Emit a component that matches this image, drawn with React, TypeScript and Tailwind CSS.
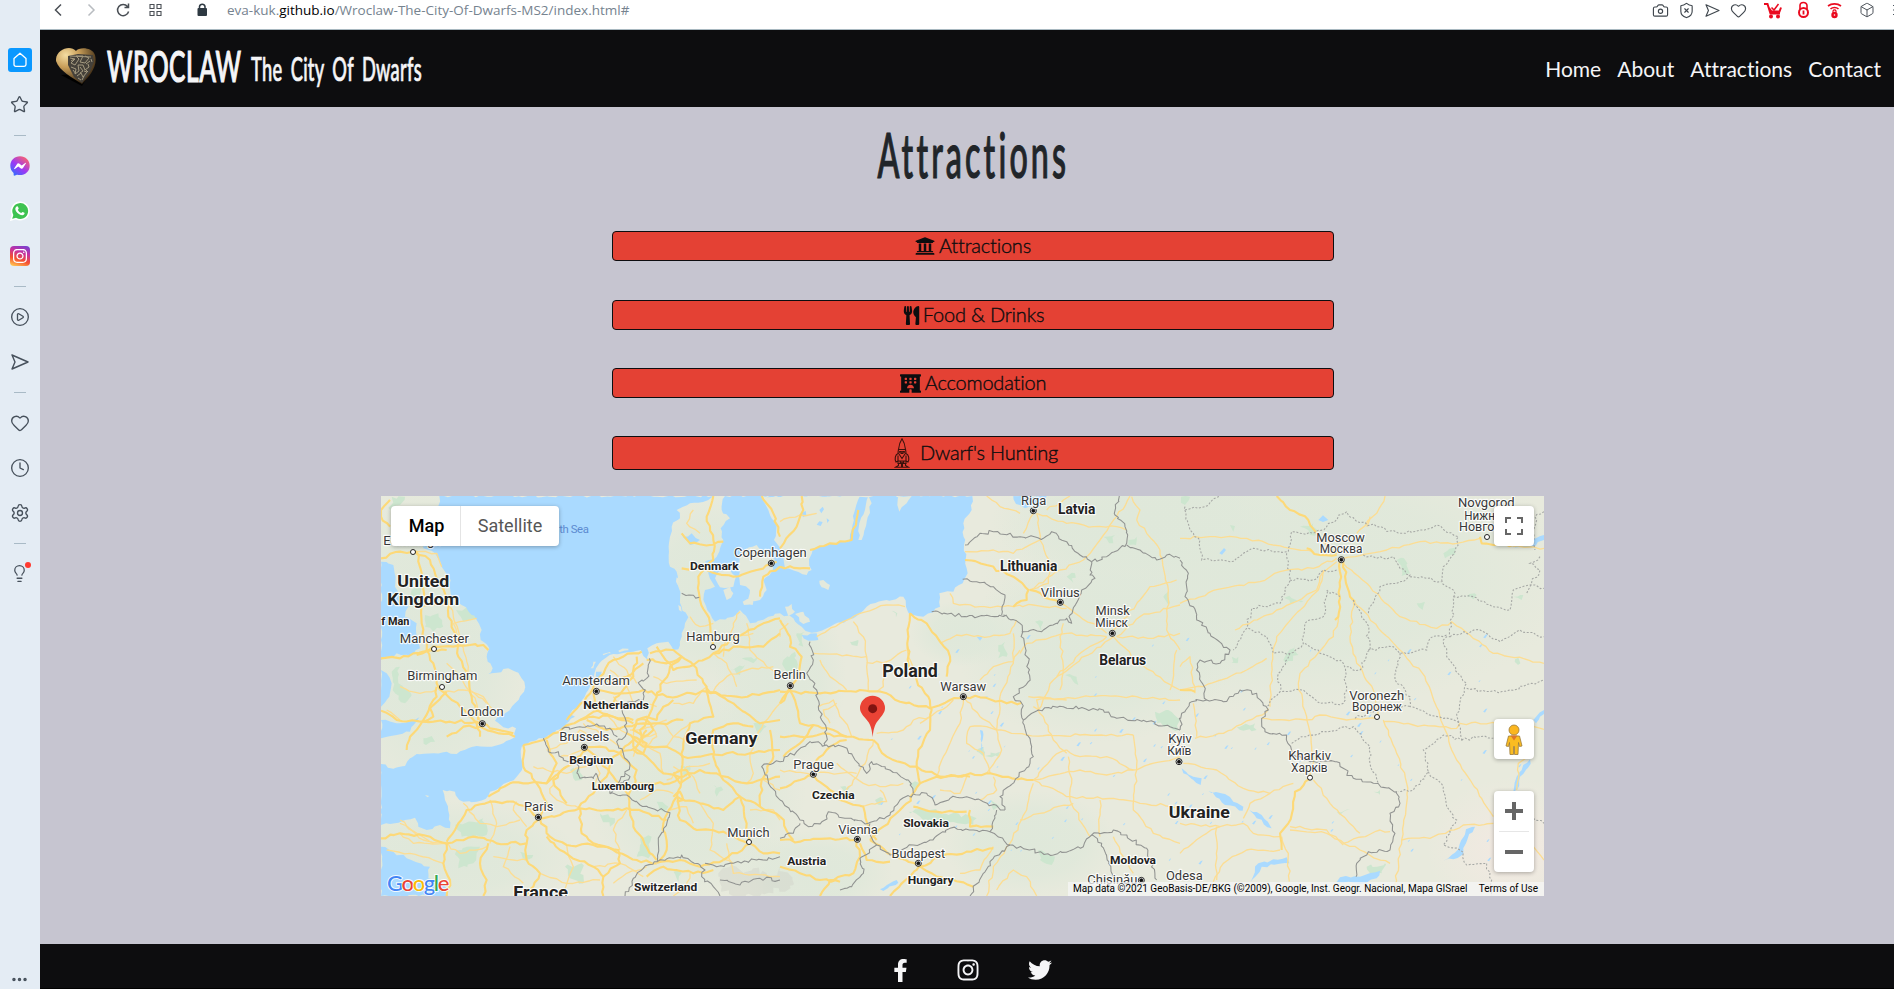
import React from "react";
import {
  FaFacebookF,
  FaFacebookMessenger,
  FaHotel,
  FaInstagram,
  FaTwitter,
  FaUniversity,
  FaUtensils,
} from "react-icons/fa";
import {
  Box,
  Camera,
  CirclePlay,
  Clock4,
  Ellipsis,
  Heart,
  Lightbulb,
  Settings,
  ShieldX,
  Star,
} from "lucide-react";

/* ---------- map geometry: three 1200-unit wide tiles (west, centre, east) ---------- */

type Pt = [number, number];

const parse = (s: string): Pt[] =>
  s.split(" ").map((p) => p.split(",").map(Number) as Pt);

// Deterministic noise, so lines look surveyed rather than ruled.
const noise = (n: number) => {
  const v = Math.sin(n * 12.9898) * 43758.5453;
  return v - Math.floor(v) - 0.5;
};

const rough = (s: string, amp: number, step: number, closed = false) => {
  const pts = parse(s);
  if (closed) pts.push(pts[0]);
  let d = `M${pts[0][0]},${pts[0][1]}`;
  for (let i = 1; i < pts.length; i++) {
    const [x0, y0] = pts[i - 1];
    const [x1, y1] = pts[i];
    const n = Math.max(1, Math.round(Math.hypot(x1 - x0, y1 - y0) / step));
    for (let k = 1; k < n; k++) {
      const t = k / n;
      const seed = x0 * 0.37 + y0 * 0.91 + k * 3.1;
      d += `L${(x0 + (x1 - x0) * t + noise(seed) * amp).toFixed(1)},${(y0 + (y1 - y0) * t + noise(seed + 7) * amp).toFixed(1)}`;
    }
    d += `L${x1},${y1}`;
  }
  return d + (closed ? "Z" : "");
};

const offsets = [0, 1200, 2400];

const water: string[][] = [
  [
    "178,18 172,60 150,100 130,175 165,190 185,230 212,270 215,320 245,345 290,390 305,420 302,450 328,475 320,500 338,535 325,552 350,548 385,535 415,548 433,575 432,605 405,640 375,670 345,692 370,712 408,715 405,742 370,760 320,770 290,768 265,775 230,792 200,785 160,790 110,792 90,805 75,828 40,836 3,822 3,1005 45,1000 75,990 105,983 115,1010 140,1020 180,1005 210,1015 208,975 195,930 188,900 225,905 238,930 290,935 325,918 330,905 370,882 410,860 426,840 425,770 450,755 495,745 540,718 575,697 556,702 585,680 570,672 600,645 625,600 642,575 648,535 665,512 700,492 760,485 782,480 790,498 804,510 802,475 830,460 865,455 880,480 895,478 905,430 915,400 925,382 905,350 895,290 890,245 870,230 870,140 875,110 900,85 890,60 930,40 985,30 1000,18",
    "3,215 40,225 45,290 85,350 75,380 110,400 112,450 120,475 90,497 50,490 30,505 3,510",
    "3,540 20,550 35,580 28,620 3,650",
    "3,690 60,700 118,682 90,725 50,735 3,745",
    "3,1070 40,1085 80,1105 150,1130 145,1165 190,1180 205,1218 3,1218",
    "1035,18 1025,60 1050,85 1022,115 1030,150 1010,200 975,215 985,250 1005,290 975,300 970,330 990,370 1005,395 1060,380 1080,360 1110,400 1165,380 1200,370 1240,385 1265,410 1295,428 1350,410 1420,385 1460,350 1520,330 1570,320 1578,350 1590,375 1630,380 1680,350 1678,310 1720,305 1748,280 1763,250 1752,165 1750,100 1775,60 1777,18",
    "908,140 935,130 960,150 930,165",
    "648,545 665,545 660,575 645,570",
  ],
  ["700,18 708,42 735,55 782,48 800,18", "65,435 110,430 115,450 85,452", "300,1198 350,1170 355,1178 310,1203", "600,720 608,722 608,785 604,780", "590,440 608,442 600,452"],
  [
    "85,903 135,912 160,935 190,950 188,962 135,945",
    "5,835 40,860 65,865 62,885 40,870 10,850",
    "208,960 245,975 275,1015 262,1012 230,985",
    "212,1175 235,1120 320,1102 328,1120 245,1130 218,1168",
    "470,1176 480,1162 540,1160 600,1142 590,1165 560,1178",
    "790,1112 835,1078 858,1018 885,1010 858,1060 850,1092 820,1108",
    "1000,905 1010,860 1050,808 1052,822 1020,860 1012,898",
    "1060,690 1092,660 1092,672 1068,700",
    "980,168 1040,160 1092,135 1092,150 1050,172",
  ],
];

const islands: string[][] = [
  [
    "1145,18 1165,60 1190,110 1182,150 1205,190 1215,235 1280,255 1295,240 1287,208 1298,180 1350,162 1405,155 1415,120 1425,60 1440,18",
    "1085,185 1130,165 1160,190 1185,210 1175,245 1150,270 1160,300 1140,330 1100,335 1110,300 1080,285 1075,230",
    "1015,245 1050,240 1068,260 1060,290 1020,292 1005,265",
    "1088,335 1130,320 1118,345 1092,345",
    "1030,300 1050,290 1060,310 1040,330",
    "135,915 148,918 142,922",
    "668,492 690,486 692,490 670,496",
    "715,482 745,476 745,481 718,487",
    "632,535 640,515 648,515 640,535",
    "895,345 903,350 905,365 897,360",
    "890,262 896,268 893,285 888,275",
  ],
  [
    "265,18 275,40 245,150 235,150 238,100",
    "355,18 395,18 380,40 358,65 352,45",
    "118,272 130,270 150,285 145,300 125,292",
    "15,350 35,342 45,365 25,378",
    "45,372 70,365 90,395 70,402",
  ],
  [],
];

const forest: string[][] = [
  [
    "95,300 120,290 125,345 85,352",
    "135,375 175,370 190,410 160,425 135,410",
    "228,360 285,350 290,385 250,395",
    "35,545 60,530 55,580 95,615 75,640 38,600",
    "130,745 155,738 165,755 138,765",
    "35,20 75,20 60,45 30,60",
    "225,1005 310,985 320,1035 245,1040",
    "230,1080 300,1070 280,1120 235,1135",
    "555,1130 605,1120 610,1180 570,1165",
    "780,1045 815,1040 805,1105 770,1100",
    "660,970 705,985 690,1010",
    "570,840 600,832 605,870 580,865",
    "1050,540 1095,525 1080,555",
    "1085,505 1135,500 1120,520",
    "900,830 930,825 920,860",
    "830,935 865,950 850,965",
    "1000,885 1030,900 1010,920",
    "1120,700 1160,710 1140,730",
    "880,1145 905,1150 895,1175",
    "420,1085 460,1095 440,1110",
  ],
  [
    "10,510 45,485 50,540 15,550",
    "50,430 75,425 70,470 55,465",
    "655,465 675,455 680,500 655,505",
    "210,455 235,450 232,468",
    "335,362 352,370 348,382",
    "590,785 610,770 612,800",
    "615,798 660,785 655,800",
    "385,965 450,960 590,985 580,1005 440,990",
    "285,930 310,925 300,945",
    "180,890 215,885 205,915",
    "855,555 890,560 895,585",
    "1045,150 1070,140 1068,165 1045,165",
    "1125,665 1165,660 1200,690 1195,720 1130,700",
    "970,140 1005,135 1000,160",
    "1150,320 1165,305 1165,345",
    "860,260 885,250 880,280",
    "765,395 790,395 785,425",
    "775,1080 825,1100 815,1125 780,1110",
    "630,930 660,950 640,960",
    "370,865 420,880 405,905",
  ],
  [
    "650,210 672,205 690,250 665,258",
    "310,510 345,465 355,495 318,520",
    "790,190 830,170 825,195 795,205",
    "305,315 335,325 370,335 340,340",
    "155,500 175,500 172,520 155,518",
    "170,710 225,700 230,720 190,722",
    "360,110 400,100 410,130 390,135",
    "710,340 735,335 728,360",
    "1000,320 1030,315 1025,330",
    "470,965 510,958 480,975",
    "150,105 165,108 160,125",
    "860,320 890,315 880,328",
    "580,905 600,900 600,915",
    "1005,508 1015,503 1014,525",
    "3,20 30,20 15,45",
    "560,1130 615,1120 605,1150 570,1150",
  ],
];

const mainRoads: string[][] = [
  [
    "3,205 60,185 110,185 125,250 130,330 125,400 140,480 160,520 170,580 195,610 240,650 290,700 300,740",
    "100,185 150,210 175,270 205,330 205,380 230,440 235,500 265,560 275,620 295,690",
    "110,495 160,470 220,470 270,465 310,465 325,480",
    "3,505 60,505 100,490 160,480 200,480",
    "3,662 50,690 130,695 210,695 290,695 330,715 400,730",
    "80,780 90,740 130,690 170,620 170,590",
    "130,695 160,680 150,655 200,605",
    "200,740 250,710 300,710 340,725 405,740",
    "30,110 3,80 3,60 30,30",
    "430,765 470,755 520,730 545,718 600,690 640,680 700,680 760,700",
    "430,765 430,830 470,880 500,940 480,980",
    "325,920 390,880 430,880 500,880 560,830 620,780",
    "480,985 450,960 400,935 330,935 260,960 235,1000 225,1020 200,1055",
    "480,985 440,1020 440,1060 350,1060 280,1040 200,1060 150,1040 60,1030 3,1045",
    "480,985 510,1040 560,1065 640,1065 700,1080 770,1110 830,1120",
    "480,985 540,975 600,955 680,960 740,955 790,965 860,990",
    "500,1040 540,1080 640,1130 670,1160 670,1218",
    "440,1060 440,1110 480,1150 460,1190 440,1218",
    "600,955 605,1030 640,1060 715,1080 720,1120 670,1160",
    "200,1060 190,1120 210,1170 200,1218",
    "310,1218 320,1170 300,1120 325,1060",
    "500,880 530,820 510,790 500,750",
    "560,940 520,870 560,830",
    "595,955 640,910 680,860 700,800 760,750",
    "560,690 620,620 660,560 700,510 760,490 785,485",
    "660,560 700,580 740,560 790,520",
    "655,600 720,610 790,600 860,620 980,605 1070,620 1150,610 1200,600",
    "600,690 660,660 700,640 760,560 770,500",
    "620,690 680,720 720,715 790,700 840,700 910,690",
    "613,775 660,770 720,790 770,770 800,720",
    "613,775 650,800 700,860 745,915 750,965 760,1010 830,1110",
    "770,690 800,680 830,690 850,650 880,630",
    "740,730 790,770 860,770 910,800 960,800 1040,790 1110,790 1200,780",
    "760,780 800,800 850,850 910,860 960,840 1010,850 1100,880 1200,860",
    "790,760 780,720 800,690 820,640 870,530 905,500",
    "905,500 880,480 810,490",
    "905,500 940,525 1000,490 1080,470 1150,470 1200,430",
    "940,525 980,590 1000,680 930,700 910,760 905,860",
    "1000,490 1070,440 1150,400 1200,385",
    "1000,470 990,400 960,330 955,260 1000,210 1000,150 980,80 1000,18",
    "905,235 960,235 1060,260 1130,240 1190,215",
    "1140,320 1150,260 1200,230",
    "905,130 930,160 990,165 1030,155",
    "800,510 860,520 905,500",
    "830,470 850,500 880,540 940,525",
    "905,860 890,920 850,1000 860,1080 832,1118",
    "905,860 870,880 780,880 720,900",
    "890,920 960,940 1030,960 1080,920 1140,950 1200,980",
    "1080,920 1030,870 1000,800 1000,720 1060,700 1120,710",
    "890,910 900,990 950,1020 1030,1025 1110,1060 1150,1090 1200,1090",
    "1080,920 1100,1000 1110,1060 1030,1110",
    "1140,950 1145,870 1180,800 1170,720",
    "830,1118 900,1110 960,1130 1030,1110",
    "800,1160 850,1130 940,1150 1000,1140",
    "1145,18 1180,70 1200,140",
    "720,790 770,840 760,890 745,915",
    "770,690 760,720 790,740 820,720 800,690 770,690",
    "760,740 800,760 790,790 760,770 760,740",
    "980,595 1060,640 1140,700 1200,690",
    "640,610 650,660 700,680 760,690",
    "880,850 920,840 930,860 900,880 880,850",
    "880,920 900,905 910,930 890,935",
  ],
  [
    "0,390 30,440 30,470 65,500 60,560 30,590",
    "30,585 50,650 60,700 100,705 160,720 200,740",
    "0,605 120,610 240,600 320,610 360,635 450,655 510,630 550,620",
    "550,620 600,622 680,640 725,638",
    "390,370 385,440 385,520 410,570 445,620 455,660 450,720 415,780 410,830",
    "390,370 440,400 480,455 510,500 500,560",
    "0,740 60,740 130,730 200,740 280,750",
    "280,750 320,800 390,830 410,830 480,860 620,850 760,870",
    "410,830 420,880 380,940 310,1010 270,1050",
    "100,855 150,900 180,930 250,950 265,1010 290,1050",
    "230,1050 150,1045 60,1055 0,1050",
    "230,1050 240,1100 220,1150 150,1170 120,1218",
    "270,1050 340,1095 420,1130 480,1100 560,1085 640,1075",
    "415,1125 470,1160 580,1190",
    "420,1125 390,1160 330,1218",
    "555,210 620,225 700,260 745,300 740,330 700,350",
    "750,300 840,340",
    "0,175 50,110 70,60 65,18",
    "90,180 150,160 215,150 235,60",
    "30,590 0,640",
    "10,800 60,760 100,705",
    "0,895 60,870 100,855",
    "100,855 110,810 150,770 200,750",
    "420,880 470,860 570,860",
    "570,960 570,1010 640,1010",
    "400,950 470,965 560,965",
    "0,980 40,1050",
    "240,1060 260,1110 330,1115",
    "0,1130 60,1150 120,1170 180,1175",
    "0,640 30,600",
    "0,230 60,235 90,235",
  ],
  [
    "290,18 330,60 385,90 410,130 470,190",
    "380,175 420,195 470,195",
    "480,210 480,290 475,380 465,390",
    "490,215 510,320 525,335",
    "900,140 905,160 940,165 1000,165",
    "390,865 345,905 325,1000 300,1030 305,1080",
    "0,600 45,605",
  ],
];

const minorRoads: string[][] = [
  [
    "110,185 170,190 185,230",
    "210,350 240,440 265,530 270,600 320,640",
    "240,440 220,400 240,395 290,385",
    "190,605 250,600 310,620 340,660",
    "60,690 20,660",
    "300,700 290,640 240,560 200,520",
    "60,990 130,1050 200,1060",
    "20,1080 90,1090 160,1110 190,1120",
    "330,930 350,1000 330,1060",
    "390,1070 370,1130 430,1180",
    "560,1065 580,1130 540,1218",
    "720,1080 700,1020 740,960",
    "640,1130 720,1120 790,1160",
    "700,500 740,540 770,580",
    "690,540 740,590 760,640",
    "610,700 660,730 720,770",
    "680,670 710,710 740,730",
    "770,690 760,740 800,770 830,740 810,700",
    "750,720 820,710 860,690",
    "760,800 780,750 830,730",
    "850,850 840,790 790,760",
    "880,830 930,850 960,910",
    "860,870 920,830 990,820",
    "1000,605 1040,560 1100,540 1180,530",
    "980,590 940,640 880,640",
    "1100,400 1110,480 1160,530 1200,560",
    "930,380 960,410 1000,400",
    "1000,490 1040,520 1070,590",
    "1110,790 1120,850 1100,880",
    "1200,640 1150,700 1110,790",
    "960,940 1000,1000 990,1080 1060,1120",
    "870,960 920,950 940,1000",
    "940,60 920,100 960,130",
    "1050,440 1060,400 1080,365",
    "930,700 880,740 860,770",
    "410,935 400,960 440,1010",
    "250,940 300,1000 350,1010 420,990",
    "520,870 510,910 560,945 600,955",
    "540,800 580,790 613,775",
    "640,740 600,720 560,760 500,780",
    "930,1150 920,1190 880,1218",
    "1040,1060 1060,1150 1200,1160",
    "1110,960 1180,960 1200,990",
    "1200,900 1150,870",
    "60,1030 100,1060 190,1060 240,1090 320,1070",
    "60,1000 160,1060",
    "640,800 660,850 640,900",
    "460,830 500,840 560,850 640,820",
    "700,620 720,650 780,640 830,650",
    "820,560 860,580 950,570",
    "1030,500 1040,440 1120,430",
    "850,700 880,740 960,760",
    "780,930 830,900 880,910",
    "700,1180 740,1150 800,1130",
    "340,1100 400,1110 440,1110",
    "480,1150 560,1180 660,1170",
    "130,350 170,340 205,345",
    "60,590 120,610 170,600",
  ],
  [
    "110,440 180,400 240,370 320,345 375,350",
    "100,490 200,495 260,500 265,600",
    "220,395 250,440 260,500",
    "260,518 320,515 380,480",
    "320,515 310,590 290,605",
    "0,440 0,420 25,400",
    "510,310 520,340 600,350 700,350 760,345 860,355",
    "480,460 530,435 630,440 690,430 710,390",
    "700,430 700,520 660,620 650,720",
    "600,570 640,530 700,515 720,480",
    "550,620 540,700 490,800 470,860",
    "550,620 600,680 650,720 740,735 900,735 1060,735",
    "570,710 560,760 610,790 630,850",
    "570,710 620,710 650,720",
    "650,720 665,780 620,850",
    "290,730 370,720 400,690 450,680",
    "115,650 160,630 190,690 215,740",
    "120,510 150,560 200,600",
    "280,750 260,810 220,870 180,930",
    "400,540 385,500 385,470",
    "760,870 820,800 860,780",
    "760,870 860,920 1000,925 1080,940 1200,950",
    "760,870 900,840 980,855 1060,840 1200,800",
    "760,880 740,960 690,1060 640,1130 620,1218",
    "860,780 900,800 980,800 1060,840",
    "760,650 790,680 820,750 860,790",
    "775,660 820,570 900,490 980,440",
    "775,660 770,630 930,620 1070,620 1200,630",
    "745,620 860,630",
    "1000,440 1080,520 1180,590 1200,600",
    "1010,440 1080,380 1180,350 1200,345",
    "1010,440 1120,445 1200,430",
    "980,430 900,380 845,340",
    "980,440 860,430 740,460 720,490",
    "1000,420 1080,330 1110,290 1190,270",
    "760,70 730,130",
    "770,70 860,100 940,110 1010,110 1040,120",
    "770,70 780,150 810,220 805,280 745,300",
    "1050,18 1010,80 960,150 910,210 840,240 750,300",
    "1070,90 1100,130 1140,180 1165,300 1160,420 1200,480",
    "1070,90 1080,60 1055,20",
    "555,185 640,180 700,190 780,150",
    "800,60 850,30 870,18",
    "850,400 840,440 850,530 840,600",
    "865,800 875,880 870,930 930,1040",
    "1060,735 1070,840 1060,960 1120,1030 1200,1060",
    "880,940 780,970 720,990",
    "620,18 660,50 720,70",
    "640,860 650,900 600,930",
    "650,1200 700,1140 740,1160 770,1218",
    "640,1070 600,1140 540,1150",
    "560,860 540,910 480,900",
    "0,95 60,75 110,70",
    "150,700 130,660 170,640",
    "170,820 250,880 300,890 370,880",
    "240,950 320,935 300,900",
    "0,840 80,850 180,850 230,850",
    "420,700 500,650 520,630",
    "1000,1040 1030,1100 1060,1150",
    "960,930 960,1040",
    "1170,600 1190,480",
    "830,560 1000,440",
  ],
  [
    "0,145 90,140 200,145 330,175 400,185",
    "470,205 400,235 300,245 240,275 130,295 0,340",
    "470,215 420,260 410,300 290,360 165,420",
    "430,240 415,300 340,380 290,440 275,520 270,650",
    "475,380 460,440 360,550 355,580 380,680 400,800 390,860",
    "520,335 510,440 530,520 580,600 595,680",
    "520,330 650,470 735,560 780,680 830,810 940,980",
    "490,220 570,290 660,380 770,415 815,395 870,435 940,490 1092,520",
    "490,205 620,180 720,155 830,160 900,145",
    "530,130 590,70 615,18",
    "560,110 570,80",
    "1000,170 1092,175",
    "0,600 70,590 200,540 260,505",
    "45,745 130,730 260,665 265,655",
    "245,685 380,690 420,675 500,690 590,685",
    "610,695 700,705 830,715 840,700 1000,700 1092,718",
    "610,690 650,790 680,880 680,940 665,1050 640,1218",
    "10,820 110,840 190,895 270,910 340,880",
    "400,870 450,940 540,1030",
    "330,1010 440,1020 490,1065",
    "490,1060 600,1020 630,1025",
    "0,1000 120,1010 190,1000 220,1030 300,1040",
    "190,985 210,940 270,910",
    "110,1010 110,1170",
    "0,1090 80,1030 120,1010",
    "665,1050 750,1045 850,1005 940,1000",
    "300,1080 200,1080 130,1120 100,1175",
    "305,1040 325,1090 328,1175",
    "330,1020 440,1030 540,1080 630,1120",
    "1010,900 1015,820 1060,790",
    "1060,1070 1092,1110",
    "45,610 30,500 0,530",
    "40,640 50,740",
  ],
];

const borders: string[][] = [
  [
    "808,505 800,565 775,578 796,600 790,630 735,640 728,670 740,700 735,740 710,755 730,790 750,825 735,850 715,880 690,912",
    "545,718 590,712 615,712 650,702 690,715 712,740",
    "490,745 505,785 535,785 550,810 590,820 600,865 640,865 648,850 690,910 740,915 780,945 870,968 835,1050 832,1115 790,1135 760,1165 735,1218",
    "832,1115 880,1105 905,1095 960,1125 975,1140 965,1160 1000,1190 1020,1218",
    "975,1120 1010,1130 1060,1120 1130,1110 1200,1100",
    "735,850 750,860 720,880",
    "1200,815 1145,830 1165,880 1200,930",
    "905,310 958,322",
    "1020,1170 1080,1185 1140,1165 1200,1170",
  ],
  [
    "0,815 50,785 90,755 140,765 190,770 225,810 260,850 275,815 330,840 385,870 400,910",
    "90,455 100,510 80,550 110,600 115,650 140,720 135,765",
    "0,930 60,990 85,1010 135,990 145,965 200,985 265,1000 330,975 360,930 400,912",
    "60,1000 40,1030 0,1045",
    "400,912 440,910 465,945 510,925 560,920 610,935 675,960",
    "270,1000 265,1030 290,1065 330,1095 400,1065 450,1050 510,1015 580,1020 630,1025 650,960",
    "675,960 660,920 750,820 760,800 755,770 730,690 725,640 700,620 745,575 745,520 735,470 720,400 670,375",
    "455,365 560,380 680,375",
    "665,375 675,315 640,290 590,275 548,268",
    "555,165 600,130 640,125 720,140 790,145 815,125 860,155 900,195 935,215",
    "935,215 930,255 945,265 905,300 870,375 875,400 860,385 790,420 725,425",
    "935,215 980,200 1040,160 1035,110 1005,75 1018,18",
    "1040,165 1080,180 1130,210 1160,195 1200,205",
    "730,690 775,660 850,650 970,660 1010,685 1100,695 1170,710 1200,720",
    "630,1025 690,1065 820,1095 910,1070 935,1035 1000,1020 1100,1075 1130,1170",
    "935,1035 965,1060 1000,1160",
    "690,1065 640,1105 610,1150 570,1218",
    "290,1065 240,1105 250,1150 215,1190 180,1200",
  ],
  [
    "0,210 25,250 15,320 40,350 50,390 90,430 150,480 120,520 60,510 50,540 75,600 80,630 35,635 5,670 0,720",
    "80,630 130,635 180,600 230,610 265,660 245,685 255,725 320,735 335,790 390,815 470,815 520,865 580,880 650,905 660,940 630,970 645,1030 630,1080 565,1085 530,1120 528,1160",
  ],
];

const regionLines = [
  "15,50 30,120 60,150 65,210 150,215 220,175 320,185 330,265 300,340 215,355 200,415 160,480",
  "15,60 75,50 120,18",
  "325,185 335,125 400,130 440,110 500,65 530,95 590,110 660,130 720,120 770,105 835,140 825,185 790,230 785,270",
  "330,270 400,270 430,240 470,240",
  "785,270 820,300 820,350 810,440 790,450 800,500 860,580 830,670 845,750 790,735 730,780 745,845 700,900 655,905",
  "550,195 590,205 640,200 660,235 690,255 670,275 600,290 565,370",
  "690,260 740,265 785,275",
  "205,415 260,440 280,490 330,490 370,460 375,400 430,380 440,300 480,320",
  "520,330 560,400 570,480 540,540 495,530",
  "375,460 420,490 490,520 500,590 490,640 420,640 370,600 300,605 260,650",
  "330,490 295,550 300,605",
  "565,480 640,470 660,490 740,480 750,445 800,435",
  "660,490 645,570 690,620 690,650 790,685 840,700",
  "525,685 590,660 690,650",
  "335,760 380,740 440,725 520,710 570,770 570,820 595,880",
  "820,320 880,320 930,345 990,360 1000,300 1050,285 1092,295",
  "810,440 900,420 960,455 1020,420 1092,440",
  "860,595 930,605 990,600 1092,570",
  "745,845 790,890 800,950 830,990 790,1065 840,1080 860,1125 920,1120 935,1170 935,1218",
  "845,750 900,740 940,745",
  "1080,200 1050,220 1080,240 1050,290 1040,310",
  "1092,65 1065,80 1065,180",
  "1060,985 1092,1000",
];

type Label = {
  t: string; // text
  x: number;
  y: number;
  w: number;
  s?: number;
  b?: boolean;
};

const labels: Label[] = [
  { t: "Edinburgh", x: 97, y: 166, w: 174 },
  { t: "United", x: 130, y: 292, w: 156, s: 52, b: true },
  { t: "Kingdom", x: 130, y: 346, w: 216, s: 52, b: true },
  { t: "f Man", x: 46, y: 405, w: 84, s: 34, b: true },
  { t: "Manchester", x: 163, y: 460, w: 207 },
  { t: "Birmingham", x: 187, y: 571, w: 211 },
  { t: "London", x: 306, y: 679, w: 130 },
  { t: "Amsterdam", x: 648, y: 584, w: 203 },
  { t: "Netherlands", x: 708, y: 657, w: 197, s: 35, b: true },
  { t: "Brussels", x: 613, y: 752, w: 150 },
  { t: "Belgium", x: 634, y: 822, w: 133, s: 35, b: true },
  { t: "Luxembourg", x: 729, y: 900, w: 187, s: 33, b: true },
  { t: "Paris", x: 476, y: 962, w: 88 },
  { t: "Germany", x: 1024, y: 763, w: 217, s: 52, b: true },
  { t: "Hamburg", x: 999, y: 452, w: 161 },
  { t: "Denmark", x: 1003, y: 240, w: 146, s: 35, b: true },
  { t: "Copenhagen", x: 1171, y: 200, w: 218 },
  { t: "Munich", x: 1105, y: 1040, w: 127 },
  { t: "Switzerland", x: 857, y: 1202, w: 190, s: 35, b: true },
  { t: "France", x: 482, y: 1224, w: 164, s: 50, b: true },
  { t: "Berlin", x: 1229, y: 568, w: 97 },
  { t: "Poland", x: 1590, y: 562, w: 167, s: 54, b: true },
  { t: "Warsaw", x: 1750, y: 602, w: 138 },
  { t: "Prague", x: 1301, y: 836, w: 122 },
  { t: "Czechia", x: 1360, y: 927, w: 128, s: 35, b: true },
  { t: "Vienna", x: 1434, y: 1031, w: 119 },
  { t: "Slovakia", x: 1638, y: 1011, w: 137, s: 35, b: true },
  { t: "Austria", x: 1280, y: 1125, w: 117, s: 35, b: true },
  { t: "Budapest", x: 1615, y: 1103, w: 161 },
  { t: "Hungary", x: 1652, y: 1182, w: 137, s: 35, b: true },
  { t: "Riga", x: 1961, y: 44, w: 76 },
  { t: "Latvia", x: 2090, y: 72, w: 112, s: 42, b: true },
  { t: "Lithuania", x: 1946, y: 243, w: 172, s: 42, b: true },
  { t: "Vilnius", x: 2041, y: 320, w: 117 },
  { t: "Minsk", x: 2198, y: 374, w: 103 },
  { t: "Мінск", x: 2195, y: 411, w: 98, s: 36 },
  { t: "Belarus", x: 2228, y: 525, w: 141, s: 42, b: true },
  { t: "Moldova", x: 2259, y: 1122, w: 138, s: 35, b: true },
  { t: "Chișinău", x: 2197, y: 1183, w: 150 },
  { t: "Kyiv", x: 2400, y: 759, w: 70 },
  { t: "Київ", x: 2398, y: 795, w: 73, s: 36 },
  { t: "Ukraine", x: 2458, y: 985, w: 183, s: 52, b: true },
  { t: "Odesa", x: 2413, y: 1170, w: 110 },
  { t: "Moscow", x: 2882, y: 156, w: 146 },
  { t: "Москва", x: 2883, y: 190, w: 128, s: 36 },
  { t: "Novgorod", x: 3319, y: 50, w: 170 },
  { t: "Нижний", x: 3319, y: 90, w: 132, s: 37 },
  { t: "Новгород", x: 3322, y: 124, w: 170, s: 37 },
  { t: "Voronezh", x: 2990, y: 629, w: 165 },
  { t: "Воронеж", x: 2991, y: 663, w: 150, s: 36 },
  { t: "Kharkiv", x: 2789, y: 809, w: 128 },
  { t: "Харків", x: 2788, y: 846, w: 110, s: 36 },
];

const towns: Pt[] = [
  [99, 186], [162, 477], [186, 591], [999, 471], [1107, 1056], [3321, 141], [2991, 681], [2790, 863],
];

const capitals: Pt[] = [
  [307, 701], [649, 604], [613, 772], [475, 982], [1174, 220], [1231, 587], [1750, 620], [1300, 853],
  [1432, 1048], [1615, 1120], [1960, 62], [2041, 337], [2197, 430], [2284, 1171], [2397, 815], [2884, 209],
];

function MapCanvas() {
  const tile = (
    sets: string[][],
    draw: (s: string, key: number) => React.ReactNode
  ) =>
    sets.map((set, i) => (
      <g key={i} transform={`translate(${offsets[i]} 0)`}>
        {set.map(draw)}
      </g>
    ));

  return (
    <svg className="block h-full w-full" viewBox="3 18 3489 1200">
      <defs>
        <radialGradient id="moss">
          <stop offset="0" stopColor="#dfe8da" />
          <stop offset="0.6" stopColor="#dfe8da" stopOpacity="0.8" />
          <stop offset="1" stopColor="#dfe8da" stopOpacity="0" />
        </radialGradient>
        <radialGradient id="steppe">
          <stop offset="0" stopColor="#f3e9e2" />
          <stop offset="1" stopColor="#f3e9e2" stopOpacity="0" />
        </radialGradient>
      </defs>
      <rect x="3" y="18" width="3489" height="1200" fill="#e8eadd" />
      <g fill="url(#moss)">
        <ellipse cx="150" cy="450" rx="300" ry="500" />
        <ellipse cx="1000" cy="300" rx="260" ry="300" />
        <ellipse cx="950" cy="900" rx="330" ry="330" />
        <ellipse cx="200" cy="1100" rx="400" ry="170" />
        <ellipse cx="1200" cy="560" rx="200" ry="280" />
        <ellipse cx="1750" cy="430" rx="160" ry="100" />
        <ellipse cx="2700" cy="250" rx="900" ry="420" />
        <ellipse cx="2150" cy="480" rx="420" ry="280" />
        <ellipse cx="2250" cy="90" rx="420" ry="180" />
        <ellipse cx="1950" cy="1060" rx="260" ry="160" />
        <ellipse cx="1300" cy="1150" rx="240" ry="130" />
      </g>
      <ellipse cx="3400" cy="1080" rx="260" ry="220" fill="url(#steppe)" />
      <g fill="#cde6cf">
        {tile(forest, (s, k) => (
          <path key={k} d={rough(s, 14, 12, true)} />
        ))}
      </g>
      {/* Alpine relief */}
      <g fill="#d3d6cc" opacity="0.5">
        {[
          "1015,1150 1050,1130 1090,1150 1120,1135 1160,1160 1200,1150 1235,1170 1200,1195 1140,1218 1060,1218 1025,1190",
          "1200,1130 1225,1150 1240,1185 1215,1205 1190,1180",
        ].map((s) => (
          <path key={s} d={rough(s, 22, 10, true)} />
        ))}
      </g>
      <g fill="#aadaff">
        {tile(water, (s, k) => (
          <path key={k} d={rough(s, 9, 14, true)} />
        ))}
      </g>
      <g fill="#e4e9dc">
        {tile(islands, (s, k) => (
          <path key={k} d={rough(s, 8, 14, true)} />
        ))}
      </g>
      {/* small lakes */}
      <g fill="#aadaff">
        {Array.from({ length: 110 }, (_, i) => {
          const x = 1500 + (noise(i + 1) + 0.5) * 1950;
          const y = 430 + (noise(i * 3 + 2) + 0.5) * 700;
          const r = 3 + (noise(i + 40) + 0.5) * 5;
          return (
            <path
              key={i}
              d={`M${x},${y}l${r},${-r * 1.2}l${r * 0.8},${-1}l${-r},${r * 1.6}z`}
            />
          );
        })}
        <path d="M1265,70l12,-8l2,14l-10,6zM1318,60l10,-10l4,8l-8,12zM1310,104l8,-10l10,2l-6,12zM2518,190l14,-16l6,6l-12,14zM2815,90l14,-14l16,14l-16,6zM1340,85l8,6l-6,8z" />
      </g>
      <g fill="none" stroke="#fcdd93" strokeWidth="4" strokeLinejoin="round">
        {tile(minorRoads, (s, k) => (
          <path key={k} d={rough(s, 8, 16)} />
        ))}
      </g>
      <g fill="none" stroke="#fdd978" strokeWidth="6.4" strokeLinejoin="round">
        {tile(mainRoads, (s, k) => (
          <path key={k} d={rough(s, 9, 16)} />
        ))}
      </g>
      <g fill="none" stroke="#919391" strokeWidth="3.2" strokeLinejoin="round">
        {tile(borders, (s, k) => (
          <path key={k} d={rough(s, 11, 10)} />
        ))}
      </g>
      <g
        fill="none"
        stroke="#a6a8a5"
        strokeWidth="3.2"
        strokeDasharray="6 5"
        transform="translate(2400 0)"
      >
        {regionLines.map((s) => (
          <path key={s} d={rough(s, 10, 12)} />
        ))}
      </g>
      <g fill="#fff" stroke="#222" strokeWidth="3">
        {towns.map(([x, y]) => (
          <circle key={`${x}`} cx={x} cy={y} r="7.5" />
        ))}
        {capitals.map(([x, y]) => (
          <g key={`${x}`}>
            <circle cx={x} cy={y} r="9" />
            <circle cx={x} cy={y} r="4.5" fill="#111" stroke="#111" />
          </g>
        ))}
      </g>
      <g fontFamily="Roboto, sans-serif" textAnchor="middle" strokeLinejoin="round">
        <text x="582" y="130" fontSize="34" textLength="89" fill="#5c8ad0">
          th Sea
        </text>
        {labels.map((l) => (
          <text
            key={l.t}
            x={l.x}
            y={l.y}
            fontSize={l.s ?? 41}
            fontWeight={l.b ? 700 : 400}
            textLength={l.w}
            lengthAdjust="spacingAndGlyphs"
            fill={l.b ? "#222" : "#383838"}
            stroke="#fff"
            strokeOpacity="0.85"
            strokeWidth="7"
            paintOrder="stroke"
          >
            {l.t}
          </text>
        ))}
      </g>
      {/* marker */}
      <path
        d="M1478,741c-3,-30 -8,-40 -20,-54c-10,-12 -18,-20 -18,-33a37.5,36.5 0 0 1 75,0c0,13 -8,21 -17,33c-12,14 -17,24 -20,54z"
        fill="#ea4335"
      />
      <circle cx="1478" cy="656" r="13.5" fill="#811411" />
    </svg>
  );
}

/* ---------- small drawings ---------- */

const SendIcon = ({ className }: { className?: string }) => (
  <svg viewBox="0 0 18 16" className={className} fill="none" stroke="currentColor" strokeWidth="1.4" strokeLinejoin="round">
    <path d="M1,1L17,8L1,15L4,8Z" />
  </svg>
);

const HeartLogo = () => (
  <svg viewBox="0 0 40 40" className="h-10 w-10">
    <defs>
      <radialGradient id="gold" cx="0.25" cy="0.2" r="0.85">
        <stop offset="0" stopColor="#f4dda2" />
        <stop offset="0.4" stopColor="#c79d58" />
        <stop offset="1" stopColor="#3a2813" />
      </radialGradient>
    </defs>
    <path d="M5,28L26,39L34,26Z" fill="#000" />
    <path d="M20,4C23,0 36,0 39,8C42,19 34,29 26,37C17,31 3,24 0,14C-1,3 14,-3 20,4Z" fill="url(#gold)" />
    <path d="M12,9L22,7L37,8L38,15L34,25L26,36L18,30L12,18Z" fill="#45413a" />
    <g stroke="#a3997f" strokeWidth="1" fill="none">
      <path d="M14,11l5,1l-4,4l4,2l4,-6l-3,-3l7,0l-3,6l5,1l4,-5l-4,-2M14,9l21,1M15,14l3,-2M30,17l4,-3M35,12l1,3" />
      <path d="M15,20l5,2l-1,5l4,-3l-1,-6l5,0l2,5l4,-3l-1,-3M17,23l3,4M24,20l3,4l-3,2M30,23l2,2" />
      <path d="M21,29l4,-3l2,4l4,-5l-3,-1M26,33l2,-4M22,31l3,2" />
    </g>
  </svg>
);

const Gnome = () => (
  <svg viewBox="0 0 16 30" className="h-[30px] w-4" fill="none" stroke="#3a120d" strokeWidth="1.1">
    <path d="M8,0.8C6.5,3 5,7 4.5,11.5h7C11,7 9.500,3 8,.8Z" />
    <path d="M4.500,11.500l-.5,3l4,6l4,-6l-.5,-3M5.500,13.500h2M8.500,13.500h2M6.500,15.500h3" />
    <path d="M4,15.500C1,17 .5,21 2,24l2,-1M12,15.500c3,1.500 3.500,5.500 2,8.500l-2,-1M4,17.500v8h8v-8M4,23h8" />
    <path d="M4.500,25.500v2l-3,1.800h6v-4M11.500,25.500v2l3,1.800h-6v-4" />
    <path d="M5,14h6M6.500,23v2h3v-2" strokeWidth="1.6" />
  </svg>
);

const Pegman = () => (
  <svg viewBox="0 0 18 31" className="h-[31px] w-[18px]">
    <path d="M3.500,12h11l2.500,10l-2.500,.5l-1,-4l-.5,12h-3.500v-8h-1v8h-3.500l-.5,-12l-1,4l-2.500,-.5Z" fill="#fbbc21" stroke="#9a7a3a" strokeWidth=".8" />
    <circle cx="9" cy="6" r="5" fill="#fbb61f" stroke="#9a7a3a" strokeWidth=".8" />
    <path d="M5.500,11.500h7l-3.500,5Z" fill="#e0762a" />
  </svg>
);

/* ---------- browser chrome ---------- */

const Cell = ({ children }: { children: React.ReactNode }) => (
  <div className="flex h-[45px] w-full items-center justify-center">{children}</div>
);

const Rule = () => (
  <div className="flex h-4 w-full items-center justify-center">
    <div className="h-px w-3 bg-[#a9bac6]" />
  </div>
);

function Sidebar() {
  return (
    <aside className="flex w-10 shrink-0 flex-col items-center bg-[#e4ecf4] pt-[37px] pr-px text-[#46505b]">
      <Cell>
        <div className="flex h-6 w-6 items-center justify-center rounded-[3px] bg-[#0a98ff]">
          <svg viewBox="0 0 16 16" className="h-4 w-4" fill="none" stroke="#fff" strokeWidth="1.3" strokeLinejoin="round">
            <path d="M8,1.200L14,6.500V12.500a1.800,1.800 0 0 1 -1.800,1.800H3.800A1.800,1.800 0 0 1 2,12.500V6.500Z" />
          </svg>
        </div>
      </Cell>
      <Cell><Star size={19} strokeWidth={1.7} /></Cell>
      <Rule />
      <Cell>
        <svg width="0" height="0" className="absolute">
          <linearGradient id="msg" x1="0" y1="1" x2="0.8" y2="0">
            <stop offset="0" stopColor="#1a7bff" />
            <stop offset="0.5" stopColor="#9b38f5" />
            <stop offset="1" stopColor="#ff6568" />
          </linearGradient>
        </svg>
        <div className="relative flex items-center justify-center">
          <div className="absolute h-2.5 w-3.5 bg-white" />
          <FaFacebookMessenger size={20} fill="url(#msg)" className="relative" />
        </div>
      </Cell>
      <Cell>
        <svg viewBox="0 0 20 20" className="h-5 w-5">
          <path d="M1,19L2.500,14A8.700,8.700 0 1 1 6,17.600Z" fill="#3fc351" stroke="#fff" strokeWidth="1.6" />
          <path d="M6.200,5.800c1,-1 1.600,-.6 2,.4l.5,1.300c.1,.5 -.8,1 -.8,1.400c.8,1.500 1.900,2.500 3.300,3.100c.5,0 1,-1.200 1.500,-1l1.700,.8c.7,.6 -.6,2.500 -2.100,2.500c-3.500,-.3 -7,-3.700 -7,-6.500c0,-.8 .4,-1.500 .9,-2z" fill="#fff" />
        </svg>
      </Cell>
      <Cell>
        <div className="flex h-5 w-5 items-center justify-center rounded bg-[linear-gradient(20deg,#ffc552_5%,#f5502f_35%,#c630a0_65%,#6a43d8_100%)]">
          <FaInstagram size={16} color="#fff" />
        </div>
      </Cell>
      <Rule />
      <Cell><CirclePlay size={20} strokeWidth={1.6} /></Cell>
      <Cell><SendIcon className="h-4 w-[18px]" /></Cell>
      <Rule />
      <Cell><Heart size={20} strokeWidth={1.6} /></Cell>
      <Cell><Clock4 size={20} strokeWidth={1.6} /></Cell>
      <Cell><Settings size={20} strokeWidth={1.6} /></Cell>
      <Rule />
      <Cell>
        <div className="relative">
          <Lightbulb size={19} strokeWidth={1.6} />
          <span className="absolute -top-0.5 right-[-2px] h-1.5 w-1.5 rounded-full bg-[#ff3a30]" />
        </div>
      </Cell>
      <div className="mt-auto flex h-5 items-center">
        <Ellipsis size={19} strokeWidth={2.4} />
      </div>
    </aside>
  );
}

function AddressBar() {
  return (
    <div className="flex h-[30px] items-start border-b border-[#a8b8c0] bg-white text-[#3f464d]">
      <div className="flex h-5 w-[187px] shrink-0 items-center">
        <svg viewBox="0 0 176 20" className="h-5 w-[176px] shrink-0" fill="none" stroke="#4a4f55" strokeWidth="1.5">
          <path d="M21,4.500L15.500,10L21,15.500" />
          <path d="M48.500,4.500L54,10L48.500,15.500" stroke="#b8bcc0" />
          <path d="M87.500,6.500A5.600,5.600 0 1 0 88.600,11.500M88.500,3.500V7.500H84.500" />
          <path d="M110,4.500h4v4h-4zM117,4.500h4v4h-4zM110,11.500h4v4h-4zM117,11.500h4v4h-4z" strokeWidth="1.100" />
          <rect x="157.500" y="8" width="9.500" height="8" rx="1" fill="#2e3942" stroke="none" />
          <path d="M159.500,8.500V6.500a2.800,2.800 0 0 1 5.500,0V8.500" stroke="#2e3942" />
        </svg>
      </div>
      <div className="h-5 whitespace-nowrap font-['Open_Sans',sans-serif] text-[13.5px] leading-5 text-[#76838f]">
        eva-kuk.<span className="text-black">github.io</span>/Wroclaw-The-City-Of-Dwarfs-MS2/index.html#
      </div>
      <div className="ml-auto flex h-5 shrink-0 items-center">
        <div className="flex w-[26px] justify-center"><Camera size={17} strokeWidth={1.6} /></div>
        <div className="flex w-[26px] justify-center"><ShieldX size={17} strokeWidth={1.6} /></div>
        <div className="flex w-[26px] justify-center"><SendIcon className="h-[13px] w-[15px]" /></div>
        <div className="mr-[7px] flex w-[26px] justify-center"><Heart size={17} strokeWidth={1.6} /></div>
        <svg viewBox="0 0 90 18" className="h-[18px] w-[90px]" fill="none" stroke="#ea0a1f" strokeWidth="2">
          <path d="M6,3h3.500l3,9.500h9.500M11,7l2.500,3.500h8l1.500,-4" />
          <path d="M13.500,6.500l2.500,2.500L20.500,3" strokeWidth="1.500" />
          <circle cx="13" cy="15.500" r="1" /><circle cx="20" cy="15.500" r="1" />
          <circle cx="45.500" cy="11.500" r="4.500" />
          <path d="M42,8V4.500a3.500,3 0 0 1 7,0V8" strokeWidth="1.600" />
          <path d="M45.500,9.500v4" strokeWidth="1.800" />
          <path d="M70,5a9.500,8 0 0 1 13,0M72.500,8a5.500,5 0 0 1 8,0" strokeWidth="1.600" />
          <circle cx="76.500" cy="14" r="2" strokeWidth="2.400" />
          <path d="M75,11.500v-1.500a1.600,1.600 0 0 1 3,0v1.500" strokeWidth="1.200" />
        </svg>
        <div className="flex w-[38px] justify-center"><Box size={16} strokeWidth={1.4} /></div>
        <svg viewBox="0 0 8 18" className="h-[18px] w-2" stroke="#4a545f" strokeWidth="1.200">
          <path d="M7,4.500h1M7,9h1M7,13.500h1" />
        </svg>
      </div>
    </div>
  );
}

/* ---------- page ---------- */

const NAV = ["Home", "About", "Attractions", "Contact"];

function Header() {
  return (
    <header className="flex h-[77px] items-start justify-between bg-[#0d0d0f] font-['Lato',sans-serif] text-[#f5f5f7] [font-variant-ligatures:none]">
      <a className="flex items-start whitespace-nowrap">
        <span className="mt-[17px] ml-4 w-[51px]"><HeartLogo /></span>
        <span className="mt-[10px] w-[144px] text-[43px] leading-[52px] font-medium [-webkit-text-stroke:1.2px_#f5f5f7]">
          <span className="inline-block origin-left scale-x-[0.57] tracking-[1px]">WROCLAW</span>
        </span>
        <span className="mt-[19px] text-[32px] leading-10 font-medium [-webkit-text-stroke:0.7px_#f5f5f7] [word-spacing:6px]">
          <span className="inline-block origin-left scale-x-[0.57] tracking-[0.5px]">The City Of Dwarfs</span>
        </span>
      </a>
      <nav className="mt-[23px] mr-[13px] flex gap-4 text-[21px] leading-8">
        {NAV.map((n) => (
          <a key={n}>{n}</a>
        ))}
      </nav>
    </header>
  );
}

const CATEGORIES = [
  { label: "Attractions", icon: <FaUniversity size={20} />, cls: "h-[30px] mb-[39px] gap-1" },
  { label: "Food & Drinks", icon: <FaUtensils size={19} />, cls: "h-[30px] mb-[38px] gap-0.5" },
  { label: "Accomodation", icon: <FaHotel size={21} />, cls: "h-[30px] mb-[38px] gap-1" },
  { label: "Dwarf's Hunting", icon: <Gnome />, cls: "h-[34px] mb-[26px] gap-2.5 pl-1.5" },
];

function MapPanel() {
  return (
    <div className="relative ml-[341px] h-[400px] w-[1163px] overflow-hidden font-['Roboto',sans-serif]">
      <MapCanvas />
      <div className="absolute top-2.5 left-2.5 flex h-10 w-[168px] rounded-sm bg-white text-[18px] leading-10 shadow-[0_1px_4px_rgba(0,0,0,0.3)]">
        <div className="w-[70px] border-r border-[#e4e4e4] pl-0.5 text-center font-medium text-black">Map</div>
        <div className="flex-1 text-center text-[#565656]">Satellite</div>
      </div>
      <div className="absolute top-2.5 right-2.5 flex h-10 w-10 items-center justify-center rounded-sm bg-white shadow-[0_1px_4px_rgba(0,0,0,0.3)]">
        <svg viewBox="0 0 18 18" className="h-[18px] w-[18px]" fill="none" stroke="#666" strokeWidth="2">
          <path d="M1,6V1H6M12,1H17V6M17,12V17H12M6,17H1V12" />
        </svg>
      </div>
      <div className="absolute right-2.5 bottom-[137px] flex h-10 w-10 items-center justify-center rounded-sm bg-white shadow-[0_1px_4px_rgba(0,0,0,0.3)]">
        <Pegman />
      </div>
      <div className="absolute right-2.5 bottom-6 flex h-[81px] w-10 flex-col items-center rounded-sm bg-white shadow-[0_1px_4px_rgba(0,0,0,0.3)]">
        <svg viewBox="0 0 40 81" className="h-[81px] w-10" fill="none">
          <path d="M11,20H29M20,11V29M11,61H29" stroke="#666" strokeWidth="4" />
          <path d="M5,40.500H35" stroke="#e6e6e6" />
        </svg>
      </div>
      <div className="absolute bottom-0 left-[6px] text-[22px] leading-[27px] font-medium tracking-[-1.4px] text-[#4285f4] [paint-order:stroke] [-webkit-text-stroke:2px_rgba(255,255,255,0.85)] font-['Lato',sans-serif]">
        G<span className="text-[#ea4335]">o</span><span className="text-[#fbbc05]">o</span>g<span className="text-[#34a853]">l</span><span className="text-[#ea4335]">e</span>
      </div>
      <div className="absolute right-0 bottom-0 flex h-3.5 w-[476px] justify-between bg-[#f5f5f5]/75 pr-1.5 pl-[5px] text-[10px] leading-[14px] whitespace-nowrap text-black">
        <span>Map data ©2021 GeoBasis-DE/BKG (©2009), Google, Inst. Geogr. Nacional, Mapa GISrael</span>
        <span>Terms of Use</span>
      </div>
    </div>
  );
}

export default function App() {
  return (
    <div className="flex h-[989px] w-[1894px] overflow-hidden">
      <Sidebar />
      <div className="flex min-w-0 flex-1 flex-col">
        <AddressBar />
        <Header />
        <main className="flex h-[837px] flex-col bg-[#c6c5d0] font-['Lato',sans-serif] [font-variant-ligatures:none]">
          <h1 className="flex h-[124px] justify-center pt-[7px] pl-3 text-[62px] leading-[80px] text-[#212529] [-webkit-text-stroke:1.2px_#212529]">
            <span className="inline-block scale-x-[0.52] font-medium tracking-[6px]">Attractions</span>
          </h1>
          <div className="ml-[572px] flex w-[722px] flex-col">
            {CATEGORIES.map((c) => (
              <button
                key={c.label}
                className={`flex items-center justify-center rounded border border-[#0d0d0f] bg-[#e44134] text-[20px] leading-7 font-light tracking-[-0.2px] text-[#0d0d0f] [-webkit-text-stroke:0.35px_#0d0d0f] ${c.cls}`}
              >
                {c.icon}
                <span className="-mt-0.5">{c.label}</span>
              </button>
            ))}
          </div>
          <MapPanel />
        </main>
        <footer className="flex h-[45px] items-center border-b border-black bg-[#0d0d0f] pt-2 text-[#f5f5f7]">
          <div className="ml-[848px] flex w-6 justify-center"><FaFacebookF size={23} /></div>
          <div className="ml-11 flex w-6 justify-center"><FaInstagram size={24} /></div>
          <div className="ml-[48px] flex w-6 justify-center"><FaTwitter size={24} /></div>
        </footer>
      </div>
    </div>
  );
}
